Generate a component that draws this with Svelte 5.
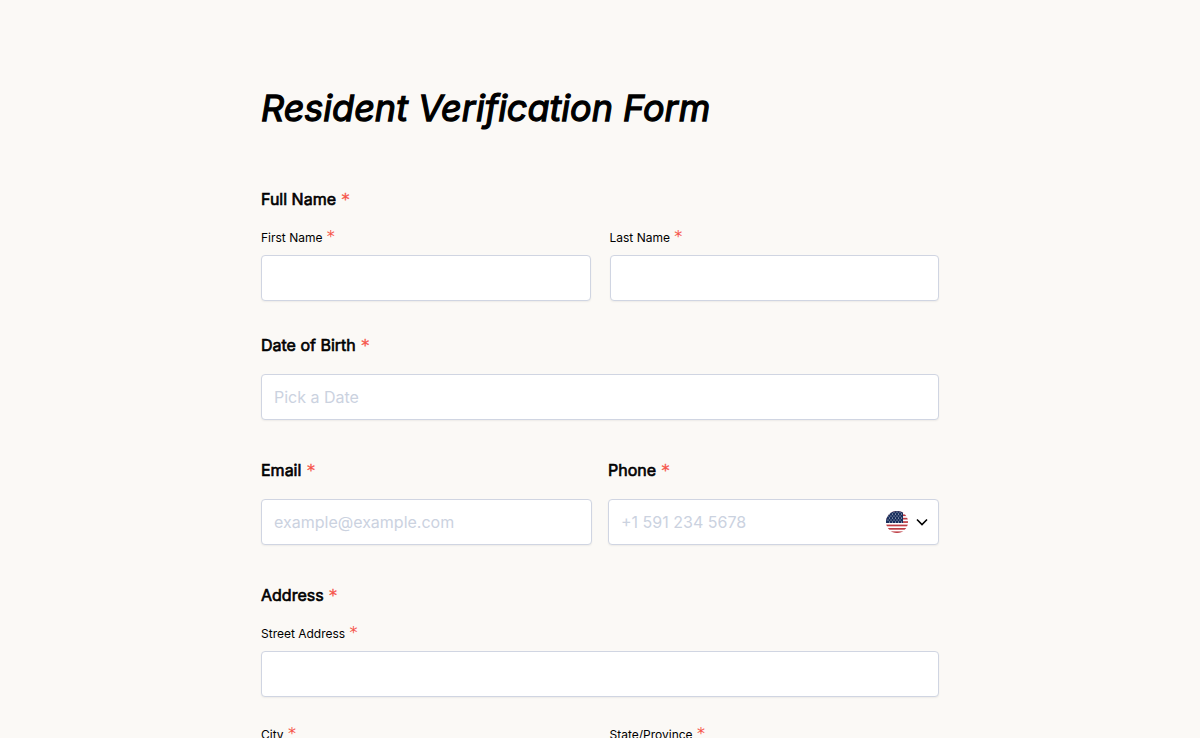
<script>
  let firstName = '';
  let lastName = '';
  let birthDate = '';
  let email = '';
  let phone = '';
  let street = '';
  let city = '';
  let region = '';

  const stripes = [0, 1, 2, 3, 4, 5, 6];
  const starRows = [1, 3, 5, 7, 9, 11];
  const starCols = [2, 5, 8, 11, 14];
</script>

<form class="page" on:submit|preventDefault>
  <h1>Resident Verification Form</h1>

  <fieldset class="group names">
    <legend>Full Name <span class="required">*</span></legend>
    <div class="columns wide">
      <div class="sub-field">
        <label for="firstName">First Name <span class="required">*</span></label>
        <input type="text" id="firstName" bind:value={firstName} />
      </div>
      <div class="sub-field">
        <label for="lastName">Last Name <span class="required">*</span></label>
        <input type="text" id="lastName" bind:value={lastName} />
      </div>
    </div>
  </fieldset>

  <div class="group field">
    <label for="birthDate">Date of Birth <span class="required">*</span></label>
    <input type="text" id="birthDate" placeholder="Pick a Date" bind:value={birthDate} />
  </div>

  <div class="group columns">
    <div class="field">
      <label for="email">Email <span class="required">*</span></label>
      <input type="email" id="email" placeholder="example@example.com" bind:value={email} />
    </div>
    <div class="field">
      <label for="phone">Phone <span class="required">*</span></label>
      <div class="phone-box">
        <input type="tel" id="phone" placeholder="+1 591 234 5678" bind:value={phone} />
        <button type="button" class="country" aria-label="Country: United States">
          <svg class="flag" viewBox="0 0 22 22">
            <defs>
              <clipPath id="flagCircle"><circle cx="11" cy="11" r="11" /></clipPath>
            </defs>
            <g clip-path="url(#flagCircle)">
              <rect width="22" height="22" fill="#fff" />
              {#each stripes as i}
                <rect y={i * 3.4} width="22" height="1.7" fill="#bd3d44" />
              {/each}
              <rect width="17" height="12" fill="#192f5d" />
              {#each starRows as y, row}
                {#each starCols as x}
                  <circle cx={x + (row % 2) * 1.5} cy={y} r="0.5" fill="#fff" />
                {/each}
              {/each}
            </g>
          </svg>
          <svg class="chevron" viewBox="0 0 12 8">
            <path d="M1 1.5 L6 6.5 L11 1.5" />
          </svg>
        </button>
      </div>
    </div>
  </div>

  <fieldset class="group">
    <legend>Address <span class="required">*</span></legend>
    <div class="sub-field">
      <label for="street">Street Address <span class="required">*</span></label>
      <input type="text" id="street" bind:value={street} />
    </div>
    <div class="columns wide next-row">
      <div class="sub-field">
        <label for="city">City <span class="required">*</span></label>
        <input type="text" id="city" bind:value={city} />
      </div>
      <div class="sub-field">
        <label for="region">State/Province <span class="required">*</span></label>
        <input type="text" id="region" bind:value={region} />
      </div>
    </div>
  </fieldset>
</form>

<style>
  :global(body) {
    background: #fbf9f6;
  }

  :global(html) {
    scrollbar-width: none;
  }

  .page {
    box-sizing: border-box;
    max-width: 710px;
    margin: 0 auto;
    padding: 84px 16px 48px;
    color: #000;
    font-family: Inter, sans-serif;
    font-size: 16px;
    line-height: 24px;
  }

  h1 {
    margin: 0 0 55px;
    font-size: 36px;
    font-weight: 400;
    font-style: italic;
    line-height: 48px;
    -webkit-text-stroke: 0.035em;
  }

  .group {
    min-width: 0;
    margin: 0 0 38px;
    padding: 0;
    border: 0;
  }

  .group.names {
    margin-bottom: 32px;
  }

  legend,
  .field > label {
    display: block;
    margin-bottom: 17px;
    padding: 0;
    font-weight: 400;
    line-height: 24px;
    -webkit-text-stroke: 0.04em;
  }

  .columns {
    display: grid;
    grid-template-columns: 1fr 1fr;
    gap: 16px;
  }

  .columns.wide {
    gap: 19px;
  }

  .next-row {
    margin-top: 28px;
  }

  .sub-field > label {
    display: block;
    margin-bottom: 7px;
    font-size: 12px;
    line-height: 20px;
  }

  .required {
    margin-left: 1px;
    color: #f6554b;
    font-family: 'DejaVu Sans', sans-serif;
    font-size: 16px;
    line-height: 0;
  }

  legend .required,
  .field .required {
    -webkit-text-stroke: 0.02em;
  }

  input {
    box-sizing: border-box;
    display: block;
    width: 100%;
    height: 46px;
    padding: 0 12px;
    border: 1px solid #d0d5e2;
    border-radius: 4px;
    background: #fff;
    box-shadow: 0 1px 2px rgba(0, 0, 0, 0.06);
    color: #000;
    font: inherit;
  }

  input::placeholder {
    color: #cbd2df;
    opacity: 1;
  }

  .phone-box {
    position: relative;
  }

  .country {
    position: absolute;
    top: 0;
    right: 11px;
    bottom: 0;
    display: flex;
    align-items: center;
    gap: 8px;
    padding: 0;
    border: 0;
    background: none;
    cursor: pointer;
  }

  .flag {
    width: 22px;
    height: 22px;
  }

  .chevron {
    width: 12px;
    height: 8px;
    fill: none;
    stroke: #000;
    stroke-width: 1.6;
  }
</style>
